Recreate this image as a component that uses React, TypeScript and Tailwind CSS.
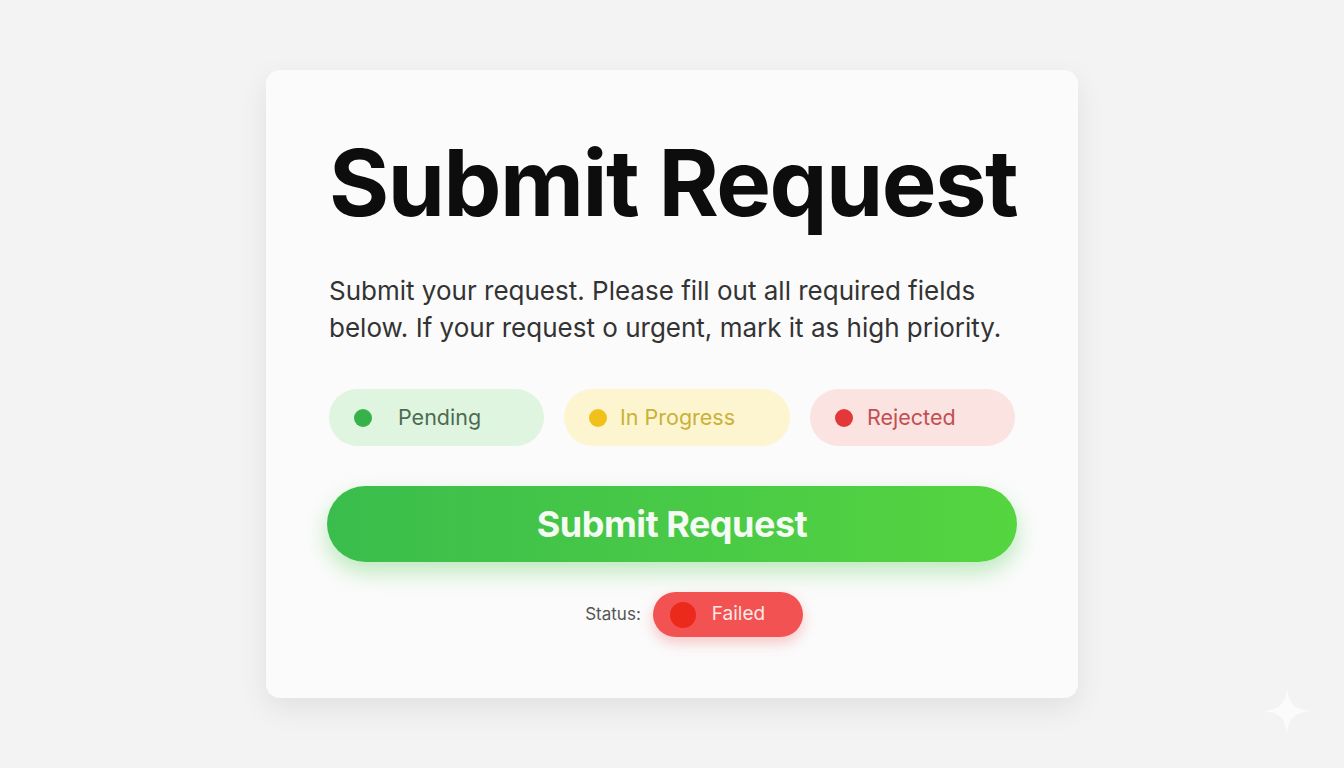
import React from "react";

const chips = [
  { label: "Pending", bg: "bg-[#dff5df]", dot: "bg-[#37b24a]", text: "text-[#4d6b52]", w: "w-[215px]", gap: "gap-[26px]" },
  { label: "In Progress", bg: "bg-[#fdf5cf]", dot: "bg-[#f2c01a]", text: "text-[#c9b237]", w: "w-[226px]", gap: "gap-[13px]" },
  { label: "Rejected", bg: "bg-[#fbe3e1]", dot: "bg-[#e2383a]", text: "text-[#c24f52]", w: "w-[205px]", gap: "gap-[14px]" },
];

function Sparkle() {
  return (
    <svg width="50" height="50" viewBox="0 0 50 50" className="absolute right-[32px] bottom-[32px]">
      <path d="M25 2 C27 18 32 23 48 25 C32 27 27 32 25 48 C23 32 18 27 2 25 C18 23 23 18 25 2 Z" fill="#fbfbfb" />
    </svg>
  );
}

export default function App() {
  return (
    <div
      className="relative w-[1344px] h-[768px] bg-[#f3f3f3] flex justify-center pt-[70px] overflow-hidden"
      style={{ fontFamily: "Inter, 'Noto Sans', sans-serif" }}
    >
      <div className="w-[812px] h-[628px] bg-[#fbfbfb] rounded-[14px] shadow-[0_10px_30px_rgba(0,0,0,0.08)] flex flex-col pl-[63px] pr-[40px]">
        <h1 className="mt-[58px] text-[92px] leading-[110px] font-bold text-[#0d0d0d] tracking-[-1.5px] whitespace-nowrap">
          Submit Request
        </h1>
        <p className="mt-[34px] text-[26px] leading-[37px] text-[#333333]">
          Submit your request. Please fill out all required fields
          <br />
          below. If your request o urgent, mark it as high priority.
        </p>
        <div className="mt-[43px] flex gap-[20px]">
          {chips.map((c) => (
            <div key={c.label} className={`${c.w} ${c.bg} ${c.gap} h-[57px] rounded-full flex items-center pl-[25px]`}>
              <span className={`w-[18px] h-[18px] rounded-full ${c.dot}`} />
              <span className={`text-[21.5px] ${c.text}`}>{c.label}</span>
            </div>
          ))}
        </div>
        <button className="mt-[40px] -ml-[2px] w-[690px] h-[76px] rounded-full bg-gradient-to-r from-[#3abd4c] to-[#55d53f] shadow-[0_10px_22px_rgba(70,200,70,0.35)] text-[#f4fbf2] text-[36px] font-bold tracking-[-0.5px]">
          Submit Request
        </button>
        <div className="mt-[30px] flex items-center justify-center gap-[12px] w-[690px] pl-[40px]">
          <span className="text-[17px] text-[#555555]">Status:</span>
          <div className="w-[150px] h-[45px] rounded-full bg-[#f25252] shadow-[0_6px_14px_rgba(240,80,80,0.3)] flex items-center pl-[17px] gap-[16px]">
            <span className="w-[26px] h-[26px] rounded-full bg-[#ec2a1c]" />
            <span className="text-[19px] text-[#fde8e6]">Failed</span>
          </div>
        </div>
      </div>
      <Sparkle />
    </div>
  );
}
